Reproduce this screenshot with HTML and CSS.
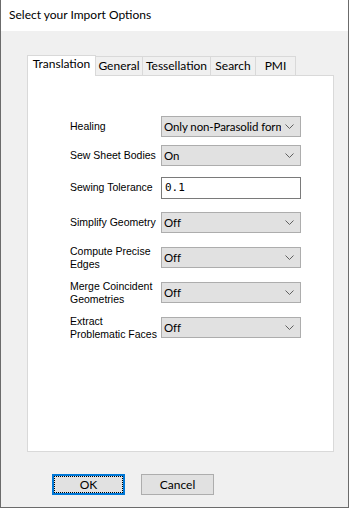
FILE: index.html
```html
<!DOCTYPE html>
<html lang="en">
<head>
    <meta charset="UTF-8">
    <title>Select your Import Options</title>
    <link rel="stylesheet" href="styles.css">
</head>
<body>
    <div class="window">
        <div class="title-bar">Select your Import Options</div>
        <div class="window-body">
            <div class="tabs">
                <div class="tab active">Translation</div>
                <div class="tab">General</div>
                <div class="tab">Tessellation</div>
                <div class="tab">Search</div>
                <div class="tab">PMI</div>
            </div>
            <div class="tab-panel">
                <div class="row tight">
                    <label class="field-label">Healing</label>
                    <div class="combo">
                        <span class="combo-text">Only non-Parasolid formats</span>
                        <svg class="chevron" width="9" height="5" viewBox="0 0 9 5"><path d="M0.5 0.5 L4.5 4.5 L8.5 0.5" fill="none" stroke="#606060" stroke-width="1"/></svg>
                    </div>
                </div>
                <div class="row tight">
                    <label class="field-label">Sew Sheet Bodies</label>
                    <div class="combo">
                        <span class="combo-text">On</span>
                        <svg class="chevron" width="9" height="5" viewBox="0 0 9 5"><path d="M0.5 0.5 L4.5 4.5 L8.5 0.5" fill="none" stroke="#606060" stroke-width="1"/></svg>
                    </div>
                </div>
                <div class="row">
                    <label class="field-label">Sewing Tolerance</label>
                    <input class="text-box" type="text" value="0.1">
                </div>
                <div class="row">
                    <label class="field-label">Simplify Geometry</label>
                    <div class="combo">
                        <span class="combo-text">Off</span>
                        <svg class="chevron" width="9" height="5" viewBox="0 0 9 5"><path d="M0.5 0.5 L4.5 4.5 L8.5 0.5" fill="none" stroke="#606060" stroke-width="1"/></svg>
                    </div>
                </div>
                <div class="row">
                    <label class="field-label">Compute Precise<br>Edges</label>
                    <div class="combo">
                        <span class="combo-text">Off</span>
                        <svg class="chevron" width="9" height="5" viewBox="0 0 9 5"><path d="M0.5 0.5 L4.5 4.5 L8.5 0.5" fill="none" stroke="#606060" stroke-width="1"/></svg>
                    </div>
                </div>
                <div class="row">
                    <label class="field-label">Merge Coincident<br>Geometries</label>
                    <div class="combo">
                        <span class="combo-text">Off</span>
                        <svg class="chevron" width="9" height="5" viewBox="0 0 9 5"><path d="M0.5 0.5 L4.5 4.5 L8.5 0.5" fill="none" stroke="#606060" stroke-width="1"/></svg>
                    </div>
                </div>
                <div class="row">
                    <label class="field-label">Extract<br>Problematic Faces</label>
                    <div class="combo">
                        <span class="combo-text">Off</span>
                        <svg class="chevron" width="9" height="5" viewBox="0 0 9 5"><path d="M0.5 0.5 L4.5 4.5 L8.5 0.5" fill="none" stroke="#606060" stroke-width="1"/></svg>
                    </div>
                </div>
            </div>
            <div class="buttons">
                <button class="btn default">OK</button>
                <button class="btn">Cancel</button>
            </div>
        </div>
    </div>
</body>
</html>
```

FILE: styles.css
```css
:root {
    --face: #f0f0f0;
    --tab-border: #d9d9d9;
    --control: #e1e1e1;
    --control-border: #adadad;
    --accent: #0078d7;
}
* {
    box-sizing: border-box;
}
body {
    margin: 0;
    font-family: 'Liberation Sans', Arial, sans-serif;
    font-size: 11px;
    color: #000;
}
.window {
    width: 349px;
    height: 508px;
    background-color: var(--face);
    border: 1px solid #6b6b6b;
    border-top: none;
}
.title-bar {
    height: 31px;
    line-height: 30px;
    padding-left: 8px;
    background-color: #fff;
    font-family: Lato, sans-serif;
    font-size: 12px;
}
.window-body {
    padding: 24px 0 0 26px;
}
.tabs {
    display: flex;
    align-items: flex-end;
    height: 20px;
    position: relative;
    z-index: 1;
}
.tab {
    height: 19px;
    line-height: 18px;
    border: 1px solid var(--tab-border);
    border-bottom: none;
    margin-right: -1px;
    font-family: Lato, sans-serif;
    font-size: 12px;
    text-align: center;
    white-space: nowrap;
    background-color: var(--face);
}
.tab.active {
    height: 21px;
    line-height: 15px;
    margin-bottom: -1px;
    background-color: #fff;
}
.tab:nth-child(2) { width: 48px; }
.tab:nth-child(3) { width: 69px; }
.tab:nth-child(4) { width: 46px; }
.tab:nth-child(5) { width: 41px; }
.tab.active { width: 69px; }
.tab-panel {
    width: 307px;
    height: 377px;
    background-color: #fff;
    border: 1px solid var(--tab-border);
    padding: 36px 0 0 42px;
}
.row {
    display: flex;
    align-items: center;
    height: 35px;
}
.row.tight {
    height: 29px;
}
.field-label {
    width: 91px;
    flex-shrink: 0;
    line-height: 13px;
    font-size: 10.5px;
    white-space: nowrap;
}
.combo {
    width: 140px;
    height: 21px;
    display: flex;
    align-items: center;
    background-color: var(--control);
    border: 1px solid var(--control-border);
    padding: 0 6px 0 2px;
}
.combo-text {
    flex: 1;
    white-space: nowrap;
    overflow: hidden;
    font-family: Lato, sans-serif;
    font-size: 11.5px;
    letter-spacing: -0.1px;
}
.chevron {
    margin-left: 4px;
    flex-shrink: 0;
}
.text-box {
    width: 140px;
    height: 22px;
    border: 1px solid #7a7a7a;
    background-color: #fff;
    padding: 0 3px;
    font-family: 'DejaVu Sans Mono', monospace;
    font-size: 11px;
    outline: none;
}
.buttons {
    display: flex;
    gap: 16px;
    padding: 22px 0 0 25px;
}
.btn {
    width: 73px;
    height: 21px;
    background-color: var(--control);
    border: 1px solid var(--control-border);
    font-family: Lato, sans-serif;
    font-size: 12px;
    padding: 0;
    line-height: 17px;
}
.btn.default {
    border: 2px solid var(--accent);
    outline: 1px dotted #000;
    outline-offset: -3px;
}
```
